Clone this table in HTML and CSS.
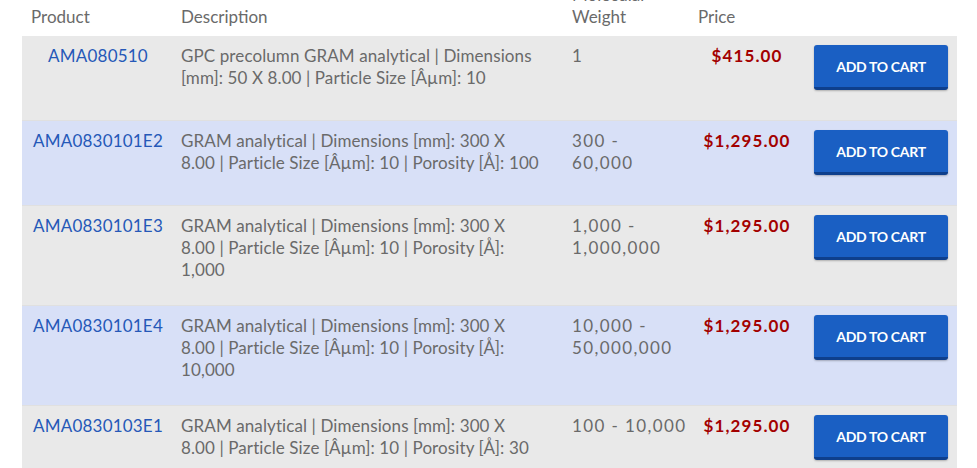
FILE: index.html
```html
<!DOCTYPE html>
<html>
<head>
<meta charset="utf-8">
<link rel="stylesheet" href="styles.css">
</head>
<body>
<table class="products">
  <colgroup>
    <col class="c-prod"><col class="c-desc"><col class="c-wt"><col class="c-price"><col class="c-btn">
  </colgroup>
  <thead>
    <tr>
      <th>Product</th>
      <th>Description</th>
      <th>Molecular<br>Weight</th>
      <th>Price</th>
      <th></th>
    </tr>
  </thead>
  <tbody>
    <tr class="gray">
      <td class="prod"><a href="#">AMA080510</a></td>
      <td class="desc">GPC precolumn GRAM analytical | Dimensions [mm]: 50 X 8.00 | Particle Size [Âµm]: 10</td>
      <td class="wt">1</td>
      <td class="price">$415.00</td>
      <td class="act"><button class="cart">ADD TO CART</button></td>
    </tr>
    <tr class="blue">
      <td class="prod"><a href="#">AMA0830101E2</a></td>
      <td class="desc">GRAM analytical | Dimensions [mm]: 300 X 8.00 | Particle Size [Âµm]: 10 | Porosity [Å]: 100</td>
      <td class="wt">300 -<br>60,000</td>
      <td class="price">$1,295.00</td>
      <td class="act"><button class="cart">ADD TO CART</button></td>
    </tr>
    <tr class="gray">
      <td class="prod"><a href="#">AMA0830101E3</a></td>
      <td class="desc">GRAM analytical | Dimensions [mm]: 300 X 8.00 | Particle Size [Âµm]: 10 | Porosity [Å]: 1,000</td>
      <td class="wt">1,000 -<br>1,000,000</td>
      <td class="price">$1,295.00</td>
      <td class="act"><button class="cart">ADD TO CART</button></td>
    </tr>
    <tr class="blue">
      <td class="prod"><a href="#">AMA0830101E4</a></td>
      <td class="desc">GRAM analytical | Dimensions [mm]: 300 X 8.00 | Particle Size [Âµm]: 10 | Porosity [Å]: 10,000</td>
      <td class="wt">10,000 -<br>50,000,000</td>
      <td class="price">$1,295.00</td>
      <td class="act"><button class="cart">ADD TO CART</button></td>
    </tr>
    <tr class="gray">
      <td class="prod"><a href="#">AMA0830103E1</a></td>
      <td class="desc">GRAM analytical | Dimensions [mm]: 300 X 8.00 | Particle Size [Âµm]: 10 | Porosity [Å]: 30</td>
      <td class="wt">100 - 10,000</td>
      <td class="price">$1,295.00</td>
      <td class="act"><button class="cart">ADD TO CART</button></td>
    </tr>
  </tbody>
</table>
</body>
</html>
```
FILE: styles.css
```css
html, body {
  margin: 0;
  padding: 0;
  background: #ffffff;
  overflow: hidden;
}
body {
  padding: 0 20px 0 22px;
  font-family: Lato, "Open Sans", sans-serif;
  color: #6a6a6a;
}
.products {
  width: 935px;
  border-collapse: collapse;
  table-layout: fixed;
  margin-top: -22px;
  font-size: 17px;
  line-height: 22px;
}
.c-prod { width: 150px; }
.c-desc { width: 391px; }
.c-wt { width: 126px; }
.c-price { width: 116px; }
.c-btn { width: 152px; }
th {
  text-align: left;
  font-weight: 400;
  padding: 6px 9px 8px;
  vertical-align: bottom;
  color: #6a6a6a;
}
td {
  vertical-align: top;
  padding: 9px 9px 24px;
  border-bottom: 1px solid #e0e0e0;
}
td.desc { padding-right: 22px; letter-spacing: 0.1px; }
td.wt { letter-spacing: 1.4px; white-space: nowrap; padding-right: 0; }
tr.gray td { background: #e9e9e9; }
tr.blue td { background: #d8e0f7; }
td.prod { text-align: center; padding-left: 4px; padding-right: 2px; letter-spacing: 0.2px; }
td.prod a { color: #2558b8; text-decoration: none; }
td.price {
  text-align: center;
  font-weight: 700;
  color: #a30000;
  padding-left: 4px;
  padding-right: 4px;
  letter-spacing: 1.1px;
}
td.act { padding-bottom: 0; }
.cart {
  display: block;
  width: 134px;
  height: 45px;
  margin-bottom: 30px;
  border: none;
  border-bottom: 3px solid #0e3f8c;
  border-radius: 3px;
  background: #1a5fc3;
  color: #ffffff;
  font-family: Lato, sans-serif;
  font-weight: 700;
  font-size: 14px;
  letter-spacing: -0.3px;
  box-shadow: 0 1px 2px rgba(0,0,0,0.25);
  cursor: pointer;
}
```
